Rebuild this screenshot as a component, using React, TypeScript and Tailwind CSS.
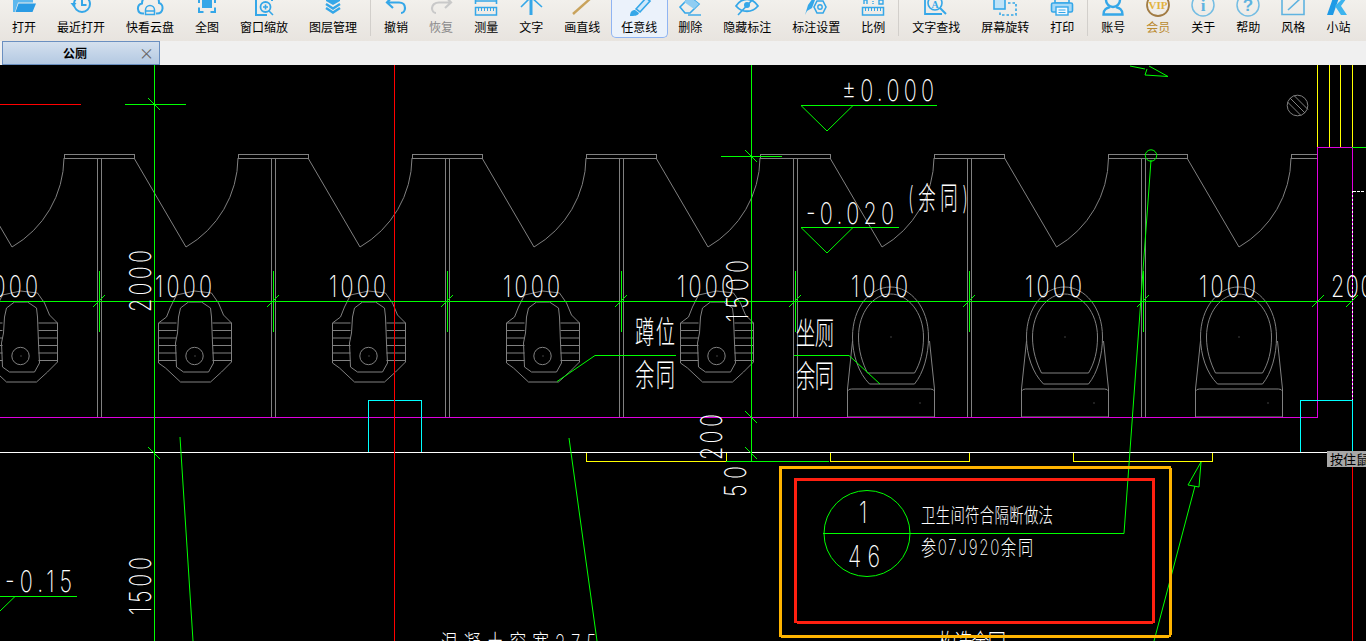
import type { ReactNode } from 'react';

const BLUE = '#35a7e8';
const GRAY = '#808080';
const GREEN = '#00ff00';
const CAD_FONT = "Inter, 'Noto Sans CJK SC', sans-serif";

// 工具栏图标：原点在按钮中线，顶部被窗口裁掉一截
function Icon({ children }: { children: ReactNode }) {
  return (
    <div className="w-[24px] h-[17px] flex justify-center">
      <svg width="30" height="17" viewBox="-15 0 30 17" fill="none" stroke={BLUE} strokeWidth="2" className="block shrink-0">
        {children}
      </svg>
    </div>
  );
}

const ruler = (
  <>
    <rect x="-10.5" y="7.5" width="21" height="7.5" strokeWidth="1.5" />
    <path d="M-7.5 8v3M-4.5 8v3M-1.5 8v3M1.5 8v3M4.5 8v3M7.5 8v3" strokeWidth="1" />
  </>
);

type Tool = { label: string; icon: ReactNode; tone?: string; active?: boolean };
type Item = Tool | 'sep';

const items: Item[] = [
  {
    label: '打开',
    icon: (
      <Icon>
        <path d="M-11 12V0H9V2.5H-6L-9 12Z" fill="#5db8ee" stroke="none" />
        <path d="M-8.5 12L-5.5 3.5H12L8.5 12Z" fill="#2a9be4" stroke="none" />
      </Icon>
    ),
  },
  {
    label: '最近打开',
    icon: (
      <Icon>
        <circle cx="1" cy="4" r="8" />
        <path d="M1 -1V5H5.5" />
        <path d="M-10.5 3H-4.5L-7.5 7Z" fill={BLUE} stroke="none" />
      </Icon>
    ),
  },
  {
    label: '快看云盘',
    icon: (
      <Icon>
        <path d="M-6 13.5H-7C-13 13.5 -14 5 -8 3.5C-8 -3 -2 -6 2 -6C8 -6 9 0 9 3C14 4 14 13.5 7 13.5H6" />
        <path d="M-4.5 14.5V10A4.5 4.5 0 0 1 4.5 10V14.5ZM-4 11H4" strokeWidth="1.5" />
      </Icon>
    ),
  },
  {
    label: '全图',
    icon: (
      <Icon>
        <rect x="-5" y="0" width="10" height="8" fill={BLUE} stroke="none" />
        <path d="M-8 7.5V12H-3.5M3.5 12H8V7.5M-8 3V-2M8 3V-2" />
      </Icon>
    ),
  },
  {
    label: '窗口缩放',
    icon: (
      <Icon>
        <path d="M-8 -1V15H3M8 -1V1" />
        <circle cx="1.5" cy="7" r="5" strokeWidth="1.8" />
        <path d="M-1 7H4M1.5 4.5V9.5M5 11L9 15" strokeWidth="1.6" />
      </Icon>
    ),
  },
  {
    label: '图层管理',
    icon: (
      <Icon>
        <path d="M-7 -2L0 -6L7 -2V1L0 5L-7 1Z" fill={BLUE} stroke="none" />
        <path d="M-7 4L0 8.5L7 4M-7 8L0 12.5L7 8" strokeWidth="2.4" />
      </Icon>
    ),
  },
  'sep',
  {
    label: '撤销',
    icon: (
      <Icon>
        <path d="M-3 -4L-9 2.5L-3 8M-9 2.5H3C7 2.5 9 5 9 8C9 11 7 13 5 13" strokeWidth="2.2" />
      </Icon>
    ),
  },
  {
    label: '恢复',
    tone: 'text-[#8a8a8a]',
    icon: (
      <Icon>
        <path d="M4 -4L10 2.5L4 8M10 2.5H-2C-6 2.5 -9 5 -9 8C-9 11 -7 13 -5 13" stroke="#c9c9c9" strokeWidth="2.2" />
      </Icon>
    ),
  },
  {
    label: '测量',
    icon: (
      <Icon>
        {ruler}
        <path d="M-10.5 -2V4M10.5 -2V4M-10.5 1H10.5" strokeWidth="1.6" />
      </Icon>
    ),
  },
  {
    label: '文字',
    icon: (
      <Icon>
        <path d="M-1.5 0H1.5V15H-1.5Z" fill={BLUE} stroke="none" />
        <path d="M-10 7L0 -3L11 7" strokeWidth="1.6" />
      </Icon>
    ),
  },
  {
    label: '画直线',
    icon: (
      <Icon>
        <path d="M-9 14L9 -2" stroke="#c9a35c" strokeWidth="2.4" />
      </Icon>
    ),
  },
  {
    label: '任意线',
    active: true,
    icon: (
      <Icon>
        <path d="M-3 9L7 -2L11 1L1 12Z" fill="#cfe8fa" strokeWidth="1.6" />
        <path d="M-9 16C-9 12 -7 10 -4 10L0 13C-1 16 -5 16 -9 16Z" fill={BLUE} stroke="none" />
      </Icon>
    ),
  },
  {
    label: '删除',
    icon: (
      <Icon>
        <path d="M-10 7L0 -3L9 4L0 13H-5Z" strokeWidth="1.6" />
        <path d="M-6 2L4 9L9 4L0 -3Z" fill="#8fcdf2" stroke="none" />
        <path d="M-2 15H11" strokeWidth="1.4" />
      </Icon>
    ),
  },
  {
    label: '隐藏标注',
    icon: (
      <Icon>
        <path d="M-11 6C-5 -3 5 -3 11 6C5 13 -5 13 -11 6Z" strokeWidth="1.8" />
        <circle cx="0" cy="5" r="3" fill={BLUE} stroke="none" />
        <path d="M-9 15L8 -3" strokeWidth="1.6" />
      </Icon>
    ),
  },
  {
    label: '标注设置',
    icon: (
      <Icon>
        <path d="M-11 15L-8 5L-3 -2L-1 0L-4 8L-9 11Z" fill={BLUE} stroke="none" />
        <path d="M1 1H7L10 7L7 13H1L-2 7Z" strokeWidth="1.6" />
        <circle cx="4" cy="7" r="2.2" strokeWidth="1.4" />
      </Icon>
    ),
  },
  {
    label: '比例',
    icon: (
      <Icon>
        {ruler}
        <path d="M-9 4V0H-6V4M6 0H10V4H6Z" strokeWidth="1.4" />
        <path d="M0 1V2M0 3V4" strokeWidth="1.4" />
      </Icon>
    ),
  },
  'sep',
  {
    label: '文字查找',
    icon: (
      <Icon>
        <path d="M-11 -1V14H6" strokeWidth="1.8" />
        <circle cx="-1" cy="3" r="7" strokeWidth="1.6" />
        <path d="M4 8L10 14" strokeWidth="2" />
        <text x="-1" y="8" fontSize="10" fontWeight="700" fill={BLUE} stroke="none" textAnchor="middle" fontFamily="'Liberation Serif', serif">
          A
        </text>
      </Icon>
    ),
  },
  {
    label: '屏幕旋转',
    icon: (
      <Icon>
        <rect x="-11" y="-4" width="11" height="13" strokeWidth="1.6" fill="#bfe3f8" />
        <path d="M3 3H11V15H-5V11" strokeWidth="1.6" strokeDasharray="2.5 2" />
      </Icon>
    ),
  },
  {
    label: '打印',
    icon: (
      <Icon>
        <path d="M-7 -1V3H7V-1" strokeWidth="1.6" />
        <rect x="-10.5" y="3" width="21" height="9" rx="1.5" fill="#a6d8f6" strokeWidth="1.6" />
        <rect x="-6" y="7" width="12" height="8" fill="#f2f9fe" strokeWidth="1.4" />
        <path d="M-3.5 10H3.5M-3.5 12.5H3.5" strokeWidth="1" />
      </Icon>
    ),
  },
  'sep',
  {
    label: '账号',
    icon: (
      <Icon>
        <circle cx="0" cy="0" r="7" strokeWidth="2.4" />
        <path d="M-3 7C-6 8 -9.5 9 -9.5 14.5H9.5C9.5 9 6 8 3 7" strokeWidth="2.4" />
      </Icon>
    ),
  },
  {
    label: '会员',
    tone: 'text-[#bb8a2e]',
    icon: (
      <Icon>
        <circle cx="0" cy="5" r="11" stroke="#a27c44" strokeWidth="1.8" />
        <text x="0" y="9" fontSize="11" fontWeight="700" fill="#e3b23c" stroke="none" textAnchor="middle" fontFamily="'Liberation Serif', serif">
          VIP
        </text>
      </Icon>
    ),
  },
  {
    label: '关于',
    icon: (
      <Icon>
        <circle cx="0" cy="5" r="11" stroke="#74bde3" strokeWidth="1.5" />
        <text x="0" y="11" fontSize="17" fontWeight="700" fill="#5fb3e0" stroke="none" textAnchor="middle" fontFamily="'Liberation Serif', serif">
          i
        </text>
      </Icon>
    ),
  },
  {
    label: '帮助',
    icon: (
      <Icon>
        <circle cx="0" cy="5" r="11" stroke="#74bde3" strokeWidth="1.5" />
        <text x="0" y="11" fontSize="17" fontWeight="700" fill="#5fb3e0" stroke="none" textAnchor="middle" fontFamily="'Liberation Sans', sans-serif">
          ?
        </text>
      </Icon>
    ),
  },
  {
    label: '风格',
    icon: (
      <Icon>
        <path d="M-11 -3V14.5H11V-1" stroke="#5fb3e0" strokeWidth="1.6" />
        <path d="M-5 10L8 -2M2 -2H8" stroke="#5fb3e0" strokeWidth="1.6" />
      </Icon>
    ),
  },
  {
    label: '小站',
    icon: (
      <Icon>
        <path d="M-11 15L-4 -5H2L-5 15Z" fill="#1f9ae6" stroke="none" />
        <path d="M-3 6L8 -5H11L3 6L9 15H3Z" fill="#3db4ee" stroke="none" />
      </Icon>
    ),
  },
];

function Toolbar() {
  return (
    <div className="h-[41px] shrink-0 overflow-hidden flex items-start pl-[1.5px] bg-gradient-to-b from-[#f2f0ec] to-[#e8e4df]">
      {items.map((item, i) =>
        item === 'sep' ? (
          <div key={i} className="w-[6px] flex justify-center">
            <div className="w-px h-[36px] bg-[#d2cfcb]" />
          </div>
        ) : (
          <div
            key={item.label}
            className={`h-[38px] flex flex-col items-center ${
              item.active ? 'px-[9.5px] border border-t-0 border-[#8fb4f2] rounded-b-[5px] bg-[#ebf2fb]' : 'px-[10.5px]'
            }`}
          >
            {item.icon}
            <span className={`mt-[3px] text-[12px] leading-[14px] whitespace-nowrap ${item.tone ?? 'text-black'}`}>{item.label}</span>
          </div>
        ),
      )}
    </div>
  );
}

function TabBar() {
  return (
    <div className="h-[24px] shrink-0 bg-[#f0f0f0] pl-[2px]">
      <div className="relative w-[158px] h-[24px] border border-[#6a8fc0] bg-gradient-to-b from-[#d4e0ee] to-[#b4c9e2] flex items-center justify-center">
        <span className="text-[12px] font-bold text-black pr-[12px]">公厕</span>
        <span className="absolute right-[5px] top-[3px] text-[15px] leading-[15px] text-[#666]">×</span>
      </div>
    </div>
  );
}

function CadText({ x, y, size = 30, sx = 0.72, width, rotate, children }: { x: number; y: number; size?: number; sx?: number; width?: number; rotate?: boolean; children: ReactNode }) {
  return (
    <text
      transform={`translate(${x} ${y}) ${rotate ? 'rotate(-90) ' : ''}scale(${sx} 1)`}
      fontSize={size}
      fontWeight="200"
      fontFamily={CAD_FONT}
      fill="#fff"
      stroke="none"
      textLength={width ? width / sx : undefined}
      lengthAdjust="spacing"
    >
      {children}
    </text>
  );
}

function Door({ c }: { c: number }) {
  return <path d={`M${c + 104} 158A104 104 0 0 1 ${c + 52} 247L${c} 158`} />;
}

function Squat({ x }: { x: number }) {
  const rows = [-33, -25.5, -18, -10.5, -3, 4.5];
  return (
    <g transform={`translate(${x} 356)`}>
      <path d="M0 -65L-18 -61L-24 -49L-28 -39L-36 -33V7L-29 12L-14 26H16L27 16L37 6V-33L29 -41L24 -53L17 -63Z" />
      <path d="M-16 -39L-14 -48L-6 -54H7L16 -48L17 -39L18 -13L19 7L14 16H-11L-18 11L-19 -13L-17 -23Z" />
      {rows.map((r) => (
        <path key={r} d={`M-36 ${r}H-18M18 ${r}H37`} />
      ))}
      <circle cx="0" cy="0" r="8.7" />
      <path d="M0 0h1" />
    </g>
  );
}

function Seat({ x }: { x: number }) {
  return (
    <g transform={`translate(${x} 337)`}>
      <path d="M-21 47C-32 36 -38 18 -38 0C-38 -30 -20 -50 0 -50C20 -50 38 -30 38 0C38 18 33 36 24 47Z" />
      <path d="M-23 36C-28 26 -32 14 -32 0C-32 -25 -17 -43 0 -43C17 -43 33 -25 33 0C33 14 30 26 24 36Z" />
      <path d="M-38 4L-43 52V80H44V52L39 4" />
      <path d="M-43 54Q-42 52 -39 52H40Q43 52 44 54" />
      <path d="M0 0h1M29 66h1" />
    </g>
  );
}

function Tick({ x, y }: { x: number; y: number }) {
  return <path d={`M${x - 6} ${y + 6}L${x + 6} ${y - 6}`} />;
}

function Drawing() {
  const doors = [-40, 134, 308, 482, 656, 830, 1004.5, 1187];
  const bars = [
    [64, 134],
    [238, 308],
    [412, 482],
    [586, 656],
    [760, 830],
    [934.5, 1004.5],
    [1108.5, 1187],
    [1291, 1317],
  ];
  const walls = [97, 271, 445, 619, 793, 967, 1141];
  const dims = [99, 273, 447, 621, 795, 969, 1143];

  return (
    <svg width="1366" height="576" viewBox="0 65 1366 576" fill="none" shapeRendering="crispEdges" className="block">
      {/* 平面图：隔断、门、洁具 */}
      <g stroke={GRAY} strokeWidth="1" shapeRendering="auto">
        {doors.map((c) => (
          <Door key={c} c={c} />
        ))}
        {bars.map(([a, b]) => (
          <path key={a} d={`M${a} 158.5V154.5H${b}V158.5H${a}`} shapeRendering="crispEdges" />
        ))}
        {walls.map((x) => (
          <path key={x} d={`M${x + 0.5} 158V417M${x + 4.5} 158V417`} shapeRendering="crispEdges" />
        ))}
        {[20.5, 194.5, 368.5, 542.5, 716.5].map((x) => (
          <Squat key={x} x={x} />
        ))}
        {[890.5, 1064.5, 1238.5].map((x) => (
          <Seat key={x} x={x} />
        ))}
        <circle cx="1297.5" cy="105.5" r="10.3" />
        <path d="M1290 98L1305 113M1294 95.5L1308 109.5M1287.5 102L1301 115.5" />
      </g>

      {/* 墙线 */}
      <path d="M0 417.5H1317.5V147.5H1352.5V191" stroke="#e000e0" />
      <path d="M1352.5 191V400" stroke="#fff" strokeDasharray="2 2" />
      <path d="M1352.5 191V400" stroke="#e000e0" strokeDasharray="2 2" strokeDashoffset="2" />
      <path d="M1353 191.5H1364" stroke="#fff" strokeDasharray="3 1" />
      <path d="M1317.5 65V147M1329.5 65V147M1340.5 65V147M1352.5 65V147" stroke="#ffff00" />
      <path d="M586.5 453V461.5H726V453M830.5 453V461.5H969.5V453M1073.5 453V461.5H1212.5V453" stroke="#ffff00" />
      <rect x="368.5" y="400.5" width="53" height="52" stroke="#00ffff" />
      <rect x="1300.5" y="400.5" width="52" height="52" stroke="#00ffff" />
      <path d="M0 452.5H1366" stroke="#fff" />

      {/* 标注线 */}
      <path d="M394.5 65V641M1352.5 467V641M0 104.5H81" stroke="#ff0000" />
      <g stroke={GREEN}>
        <path d="M154.5 65V641" />
        <path d="M751.5 65V461M0 301.5H1352M1352 147.5H1366M125 104.5H186M721 156.5H782M726 461.5H829" />
        {dims.map((x) => (
          <g key={x}>
            <path d={`M${x + 0.5} 271V332`} />
            <Tick x={x} y={301} />
          </g>
        ))}
        <Tick x={1318} y={301} />
        <Tick x={1352} y={301} />
        <path d="M148 98L160 110M745 150L757 162M745 411L757 423M148 447L160 459M745 447L757 459" />
        <g shapeRendering="auto">
          <path d="M180 437L193 641M569 438L597 641" />
          <path d="M801 105.5H937M801 105.5L827 131L853 105.5" />
          <path d="M801 227.5H899M801 227.5L827 253L853 227.5" />
          <path d="M0 596.5H77M15 596.5L0 611" />
          <path d="M557 381.5L595 355.5H676" />
          <path d="M794 355.5H849L880 384" />
          <circle cx="867" cy="533.5" r="43" />
          <path d="M823 533.5H1124L1151 160" />
          <circle cx="1151" cy="155.5" r="5.7" />
          <path d="M1130 66L1145 69M1149 66L1168 76.5L1145 75L1147 69" />
          <path d="M1201 462L1188 485L1199 487L1201 462M1195 486L1154 641" />
        </g>
      </g>

      {/* 文字 */}
      <g shapeRendering="auto">
        {[-19, 155, 329, 503, 677, 851, 1025, 1199].map((x) => (
          <CadText key={x} x={x} y={297} width={57}>
            1000
          </CadText>
        ))}
        <CadText x={1331} y={297} width={57}>
          2000
        </CadText>
        <CadText x={151} y={312} width={62} rotate>
          2000
        </CadText>
        <CadText x={748} y={322} width={62} rotate>
          1500
        </CadText>
        <CadText x={722} y={460} width={46} rotate>
          200
        </CadText>
        <CadText x={746} y={497} width={31} rotate>
          50
        </CadText>
        <CadText x={151} y={615} width={58} rotate>
          1500
        </CadText>
        <CadText x={842} y={101} width={92}>
          ±0.000
        </CadText>
        <CadText x={806} y={224} width={88}>
          -0.020
        </CadText>
        <CadText x={5} y={592} width={67}>
          -0.15
        </CadText>
        <CadText x={908} y={209} size={31} sx={0.56} width={60}>
          (余同)
        </CadText>
        <CadText x={635} y={343} size={31} sx={0.62} width={40}>
          蹲位
        </CadText>
        <CadText x={635} y={386} size={31} sx={0.62} width={40}>
          余同
        </CadText>
        <CadText x={796} y={344} size={31} sx={0.62} width={38}>
          坐厕
        </CadText>
        <CadText x={796} y={387} size={31} sx={0.62} width={38}>
          余同
        </CadText>
        <CadText x={859} y={523} size={30} width={12}>
          1
        </CadText>
        <CadText x={848} y={567} size={30} width={32}>
          46
        </CadText>
        <CadText x={921} y={523} size={20} width={132}>
          卫生间符合隔断做法
        </CadText>
        <CadText x={921} y={555} size={21} width={112}>
          参07J920余同
        </CadText>
        <CadText x={938} y={653} size={26} sx={0.7} width={68}>
          构造余同
        </CadText>
        <CadText x={441} y={652} size={24} sx={0.7} width={155}>
          混凝土窗宽375
        </CadText>
      </g>

      {/* 审图标记框 */}
      <rect x="780" y="467" width="390" height="169" rx="1" stroke="#ffb400" strokeWidth="3" />
      <rect x="795.5" y="479" width="358" height="143" rx="1" stroke="#ff2010" strokeWidth="3" />
    </svg>
  );
}

export default function App() {
  return (
    <div className="h-screen w-full overflow-hidden flex flex-col bg-black font-['Noto_Sans_CJK_SC','Liberation_Sans',sans-serif]">
      <Toolbar />
      <TabBar />
      <div className="relative flex-1 overflow-hidden bg-black">
        <Drawing />
        <div className="absolute left-[1327px] top-[386px] w-[39px] h-[16px] overflow-hidden bg-[#a8a8a8] pl-[3px] text-[13px] leading-[16px] text-black whitespace-nowrap">
          按住鼠标左键
        </div>
      </div>
    </div>
  );
}
